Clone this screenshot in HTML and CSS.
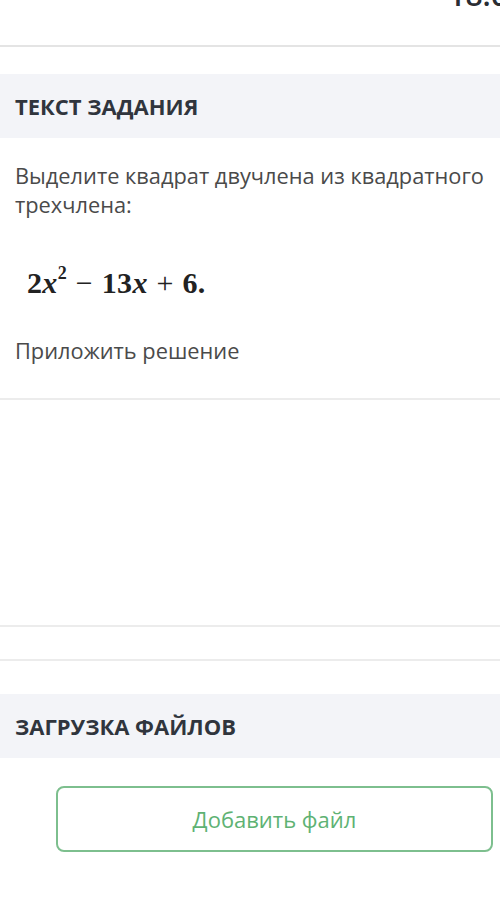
FILE: index.html
```html
<!DOCTYPE html>
<html lang="ru">
<head>
<meta charset="utf-8">
<link rel="stylesheet" href="styles.css">
</head>
<body>
<div class="top">
  <span class="time">18.0</span>
</div>
<section class="section">
  <div class="band"><h2 class="title">ТЕКСТ ЗАДАНИЯ</h2></div>
  <div class="content">
    <p class="text">Выделите квадрат двучлена из квадратного трехчлена:</p>
    <p class="formula">2<i>x</i><sup>2</sup> <span class="op">−</span> 13<i>x</i> <span class="op">+</span> 6.</p>
    <p class="text attach">Приложить решение</p>
  </div>
</section>
<div class="blank"></div>
<div class="gap"></div>
<section class="section second">
  <div class="band"><h2 class="title">ЗАГРУЗКА ФАЙЛОВ</h2></div>
  <div class="upload">
    <button class="btn" type="button">Добавить файл</button>
  </div>
</section>
</body>
</html>
```
FILE: styles.css
```css
* { box-sizing: border-box; }
html, body { margin: 0; padding: 0; background: #fff; }
body {
  width: 500px;
  height: 918px;
  overflow: hidden;
  font-family: "Open Sans", "Noto Sans", sans-serif;
  color: #4a4a4a;
}
.top {
  height: 47px;
  border-bottom: 2px solid #e4e4e4;
  display: flex;
  justify-content: flex-end;
  overflow: hidden;
}
.time {
  font-size: 30px;
  font-weight: 600;
  color: #2a2d33;
  line-height: 1;
  margin-top: -20px;
  margin-right: -8px;
}
.section { margin-top: 27px; }
.section.second { margin-top: 33px; }
.band {
  background: #f3f4f8;
  height: 64px;
  display: flex;
  align-items: center;
  padding-left: 15px;
}
.title {
  margin: 0;
  font-size: 22px;
  font-weight: 700;
  color: #30353d;
  letter-spacing: 0;
}
.content {
  padding: 23px 0 0 15px;
  border-bottom: 2px solid #ececec;
  height: 262px;
}
.text {
  margin: 0;
  font-size: 21.8px;
  line-height: 29px;
}
.formula {
  margin: 49px 0 0 12px;
  font-family: "Liberation Serif", "DejaVu Serif", serif;
  font-weight: 700;
  font-size: 30px;
  color: #222;
  line-height: 30px;
  word-spacing: 1px;
  letter-spacing: 0.3px;
}
.formula i { font-style: italic; font-weight: 700; }
.formula sup { font-size: 18px; vertical-align: 14px; line-height: 0; }
.formula .op { font-weight: 400; }
.attach { margin-top: 38px; }
.blank {
  height: 227px;
  border-bottom: 2px solid #ececec;
}
.gap {
  height: 34px;
  border-bottom: 2px solid #ececec;
}
.upload {
  padding: 28px 7px 0 56px;
}
.btn {
  width: 437px;
  height: 66px;
  border: 2px solid #7dbf8e;
  border-radius: 8px;
  background: #fff;
  color: #5eb273;
  font-family: "Open Sans", "Noto Sans", sans-serif;
  font-size: 22px;
  padding: 0;
}
```
